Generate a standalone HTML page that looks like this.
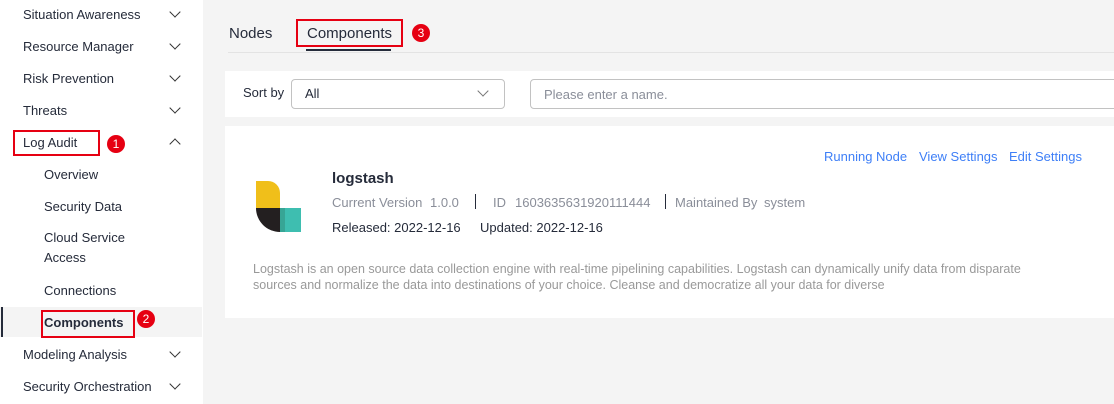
<!DOCTYPE html>
<html><head><meta charset="utf-8"><style>
*{margin:0;padding:0;box-sizing:border-box}
body{width:1114px;height:404px;overflow:hidden;background:#f4f4f4;font-family:"Liberation Sans",Arial,sans-serif;font-size:13px;color:#252b3a;position:relative}
.abs{position:absolute;white-space:nowrap}
.side{left:0;top:0;width:203px;height:404px;background:#fff}
.it{position:absolute;left:23px;font-size:13px;color:#252b3a;white-space:nowrap}
.sub{left:44px}
.chev{position:absolute;left:171px;width:8px;height:8px;border-right:1.5px solid #333;border-bottom:1.5px solid #333;transform:rotate(45deg)}
.up{transform:rotate(-135deg)}
.red{position:absolute;border:2px solid #e60012}
.badge{position:absolute;width:18px;height:18px;border-radius:50%;background:#e60012;color:#fff;font-size:12px;text-align:center;line-height:18px}
.gray{color:#8a8e99}
.link{color:#3e7ff7;position:absolute;top:149px;font-size:13px}
</style></head><body>
<div class="abs side"></div>
<div class="it" style="top:7px">Situation Awareness</div><div class="chev" style="top:8px"></div>
<div class="it" style="top:39px">Resource Manager</div><div class="chev" style="top:40px"></div>
<div class="it" style="top:71px">Risk Prevention</div><div class="chev" style="top:72px"></div>
<div class="it" style="top:103px">Threats</div><div class="chev" style="top:104px"></div>
<div class="it" style="top:135px">Log Audit</div><div class="chev up" style="top:140px"></div>
<div class="red" style="left:13px;top:130px;width:87px;height:26px"></div>
<div class="badge" style="left:107px;top:135px">1</div>
<div class="it sub" style="top:167px">Overview</div>
<div class="it sub" style="top:199px">Security Data</div>
<div class="it sub" style="top:228px;line-height:20px">Cloud Service<br>Access</div>
<div class="it sub" style="top:283px">Connections</div>
<div class="abs" style="left:0;top:307px;width:202px;height:30px;background:#f4f4f4"></div>
<div class="abs" style="left:1px;top:307px;width:2px;height:30px;background:#252b3a"></div>
<div class="it sub" style="top:315px;font-weight:bold">Components</div>
<div class="red" style="left:41px;top:310px;width:94px;height:28px"></div>
<div class="badge" style="left:137px;top:310px">2</div>
<div class="it" style="top:347px">Modeling Analysis</div><div class="chev" style="top:348px"></div>
<div class="it" style="top:379px">Security Orchestration</div><div class="chev" style="top:380px"></div>

<div class="abs" style="left:229px;top:25px;font-size:15px">Nodes</div>
<div class="abs" style="left:307px;top:25px;font-size:15px">Components</div>
<div class="red" style="left:296px;top:19px;width:107px;height:28px"></div>
<div class="badge" style="left:412px;top:24px">3</div>
<div class="abs" style="left:228px;top:52px;width:886px;height:1px;background:#e3e3e3"></div>
<div class="abs" style="left:306px;top:49px;width:85px;height:2px;background:#252b3a"></div>

<div class="abs" style="left:225px;top:71px;width:889px;height:46px;background:#fff"></div>
<div class="abs" style="left:243px;top:85px">Sort by</div>
<div class="abs" style="left:291px;top:79px;width:214px;height:30px;border:1px solid #c2c2c2;border-radius:4px"></div>
<div class="abs" style="left:305px;top:86px">All</div>
<div class="abs" style="left:479px;top:87px;width:8px;height:8px;border-right:1.5px solid #777;border-bottom:1.5px solid #777;transform:rotate(45deg)"></div>
<div class="abs" style="left:530px;top:79px;width:600px;height:30px;border:1px solid #c2c2c2;border-radius:4px"></div>
<div class="abs gray" style="left:544px;top:87px;font-size:13px">Please enter a name.</div>

<div class="abs" style="left:225px;top:126px;width:889px;height:192px;background:#fff"></div>
<div class="link" style="left:824px">Running Node</div>
<div class="link" style="left:919px">View Settings</div>
<div class="link" style="left:1009px">Edit Settings</div>
<svg class="abs" style="left:256px;top:181px" width="46" height="52">
<path d="M0 0H12A12 12 0 0 1 24 12V27H0Z" fill="#f0bf1a"/>
<path d="M0 27H24V51A24 24 0 0 1 0 27Z" fill="#231f20"/>
<rect x="24" y="27" width="21" height="24" fill="#3ebeb0"/>
<rect x="24" y="27" width="5" height="24" fill="#37a595"/>
</svg>
<div class="abs" style="left:332px;top:170px;font-size:15px;font-weight:bold">logstash</div>
<div class="abs gray" style="left:332px;top:195px">Current Version</div>
<div class="abs gray" style="left:430px;top:195px">1.0.0</div>
<div class="abs" style="left:475px;top:194px;width:1px;height:15px;background:#252b3a"></div>
<div class="abs gray" style="left:493px;top:195px">ID</div>
<div class="abs gray" style="left:515px;top:195px">1603635631920111444</div>
<div class="abs" style="left:665px;top:194px;width:1px;height:15px;background:#252b3a"></div>
<div class="abs gray" style="left:675px;top:195px">Maintained By</div>
<div class="abs gray" style="left:764px;top:195px">system</div>
<div class="abs" style="left:332px;top:220px">Released: 2022-12-16</div>
<div class="abs" style="left:480px;top:220px">Updated: 2022-12-16</div>
<div class="abs gray" style="left:253px;top:261px;width:805px;font-size:12.5px;line-height:16px;color:#999;white-space:normal">Logstash is an open source data collection engine with real-time pipelining capabilities. Logstash can dynamically unify data from disparate sources and normalize the data into destinations of your choice. Cleanse and democratize all your data for diverse</div>
</body></html>
